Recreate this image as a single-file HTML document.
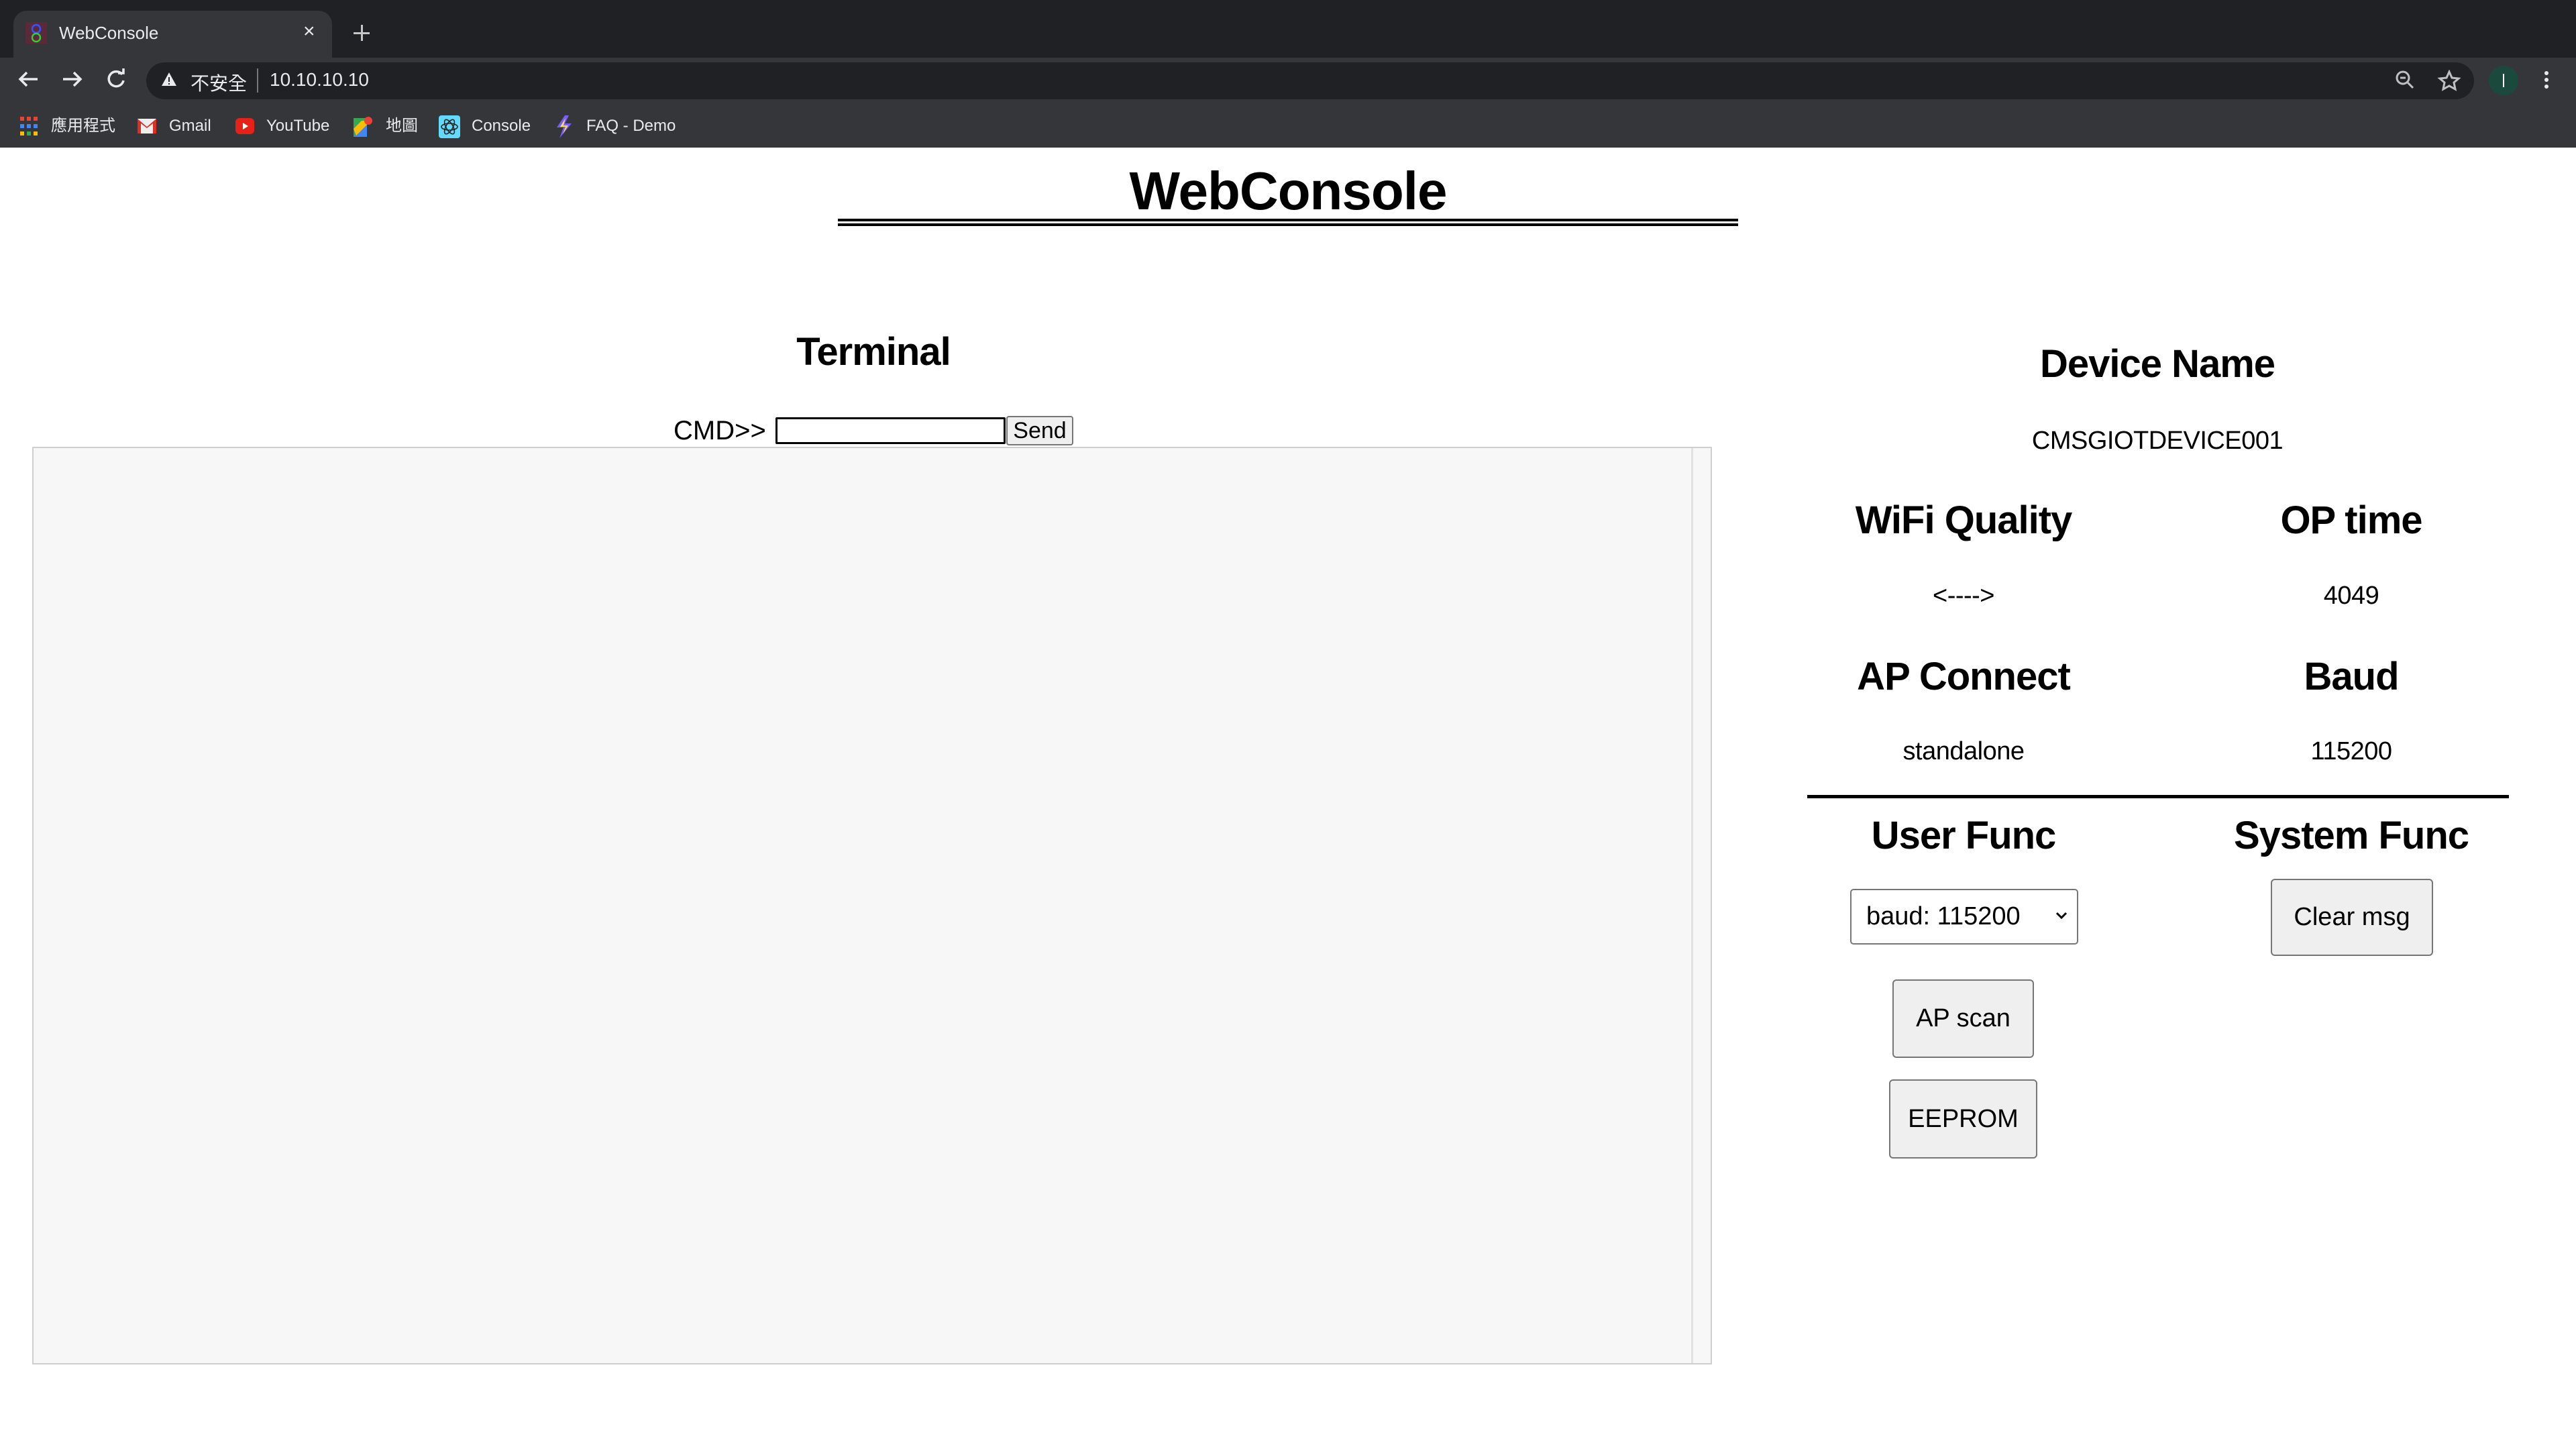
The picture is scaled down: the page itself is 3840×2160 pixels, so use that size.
<!DOCTYPE html>
<html><head><meta charset="utf-8"><style>
*{margin:0;padding:0;box-sizing:border-box}
body{width:3840px;height:2160px;background:#fff;position:relative;overflow:hidden;font-family:"Liberation Sans","Noto Sans CJK TC",sans-serif;color:#000}
.a{position:absolute}
.ct{position:absolute;transform:translateX(-50%);white-space:nowrap}
.h2{font-weight:bold;font-size:58px;line-height:1;letter-spacing:-1px}
.v{font-size:38px;line-height:1;letter-spacing:-0.5px}
.btn{position:absolute;background:#efefef;border:2px solid #767676;border-radius:6px;font-size:38px;display:flex;align-items:center;justify-content:center}
.chrome{color:#e8eaed}
.bm{position:absolute;top:174px;font-size:24px;color:#e8eaed;line-height:28px}
</style></head><body>
<div class="a" style="left:0;top:0;width:3840px;height:86px;background:#202124"></div>
<div class="a" style="left:20px;top:16px;width:475px;height:70px;background:#35363a;border-radius:20px 20px 0 0"></div>
<svg class="a" style="left:38px;top:33px" width="32" height="32"><rect x="0" y="0" width="32" height="32" fill="#5a2a3a"/><circle cx="16" cy="10" r="6" fill="none" stroke="#3355ff" stroke-width="2.5"/><circle cx="16" cy="23" r="6" fill="none" stroke="#33cc33" stroke-width="2.5"/></svg>
<div class="a chrome" style="left:88px;top:34px;font-size:26px">WebConsole</div>
<div class="a chrome" style="left:452px;top:30px;font-size:30px">×</div>
<div class="a" style="left:527px;top:48px;width:24px;height:3px;background:#c4c7c5"></div>
<div class="a" style="left:538px;top:37px;width:3px;height:24px;background:#c4c7c5"></div>
<div class="a" style="left:0;top:86px;width:3840px;height:134px;background:#35363a"></div>
<svg class="a" style="left:26px;top:102px" width="180" height="32" stroke="#e8eaed" stroke-width="3.5" fill="none">
<path d="M30 16H4M14 6L4 16L14 26"/><path d="M68 16H94M84 6L94 16L84 26"/>
<path d="M156 9A11 11 0 1 0 158 18"/><path d="M150 7H158V0" /></svg>
<div class="a" style="left:218px;top:93px;width:3470px;height:55px;background:#202124;border-radius:28px"></div>
<svg class="a" style="left:240px;top:106px" width="24" height="24"><path d="M12 2L23 22H1Z" fill="#e8eaed"/><rect x="11" y="9" width="2" height="7" fill="#202124"/><rect x="11" y="18" width="2" height="2" fill="#202124"/></svg>
<div class="a chrome" style="left:284px;top:103px;font-size:28px">不安全</div>
<div class="a" style="left:383px;top:102px;width:2px;height:36px;background:#777"></div>
<div class="a chrome" style="left:402px;top:103px;font-size:28px">10.10.10.10</div>
<svg class="a" style="left:3570px;top:104px" width="100" height="32" stroke="#bdc1c6" stroke-width="3" fill="none"><circle cx="12" cy="12" r="9"/><path d="M8 12H16M19 19L27 27"/><path d="M81 3L85 12L95 13L88 19L90 29L81 24L72 29L74 19L67 13L77 12Z"/></svg>
<div class="a" style="left:3710px;top:98px;width:44px;height:44px;border-radius:50%;background:#1b4a3c"></div>
<div class="a" style="left:3731px;top:110px;width:2px;height:20px;background:#fff"></div>
<div class="a" style="left:3793px;top:106px;width:6px;height:6px;border-radius:50%;background:#e8eaed;box-shadow:0 10px 0 #e8eaed,0 20px 0 #e8eaed"></div>
<svg class="a" style="left:30px;top:174px" width="26" height="28"><g fill="#e94335"><rect x="0" y="0" width="6" height="6"/><rect x="10" y="0" width="6" height="6"/><rect x="20" y="0" width="6" height="6"/></g><g fill="#4285f4"><rect x="0" y="11" width="6" height="6"/><rect x="10" y="11" width="6" height="6"/><rect x="20" y="11" width="6" height="6"/></g><g fill="#fbbc04"><rect x="0" y="22" width="6" height="6"/><rect x="10" y="22" width="6" height="6" fill="#34a853"/><rect x="20" y="22" width="6" height="6"/></g></svg>
<div class="bm" style="left:76px">應用程式</div>
<svg class="a" style="left:205px;top:177px" width="28" height="22"><rect width="28" height="22" fill="#eee"/><path d="M0 0L14 12L28 0V22H23V7L14 14L5 7V22H0Z" fill="#d93025"/></svg>
<div class="bm" style="left:252px">Gmail</div>
<svg class="a" style="left:351px;top:176px" width="28" height="24"><rect width="28" height="24" rx="6" fill="#e62117"/><path d="M11 7L19 12L11 17Z" fill="#fff"/></svg>
<div class="bm" style="left:397px">YouTube</div>
<svg class="a" style="left:527px;top:172px" width="28" height="32"><path d="M0 4H20V32H0Z" fill="#34a853"/><path d="M0 32L20 12V32Z" fill="#4285f4"/><path d="M0 20L12 8H20V14L4 30Z" fill="#fbbc04"/><circle cx="22" cy="8" r="6" fill="#ea4335"/></svg>
<div class="bm" style="left:575px">地圖</div>
<svg class="a" style="left:654px;top:172px" width="32" height="34"><rect width="32" height="34" rx="4" fill="#61dafb"/><g fill="none" stroke="#222" stroke-width="1.6"><ellipse cx="16" cy="17" rx="12" ry="5"/><ellipse cx="16" cy="17" rx="12" ry="5" transform="rotate(60 16 17)"/><ellipse cx="16" cy="17" rx="12" ry="5" transform="rotate(-60 16 17)"/></g></svg>
<div class="bm" style="left:703px">Console</div>
<svg class="a" style="left:826px;top:172px" width="28" height="34"><path d="M16 0L4 18H14L8 34L26 12H16L22 0Z" fill="#7b5cff"/><path d="M17 4L9 17H17L13 28L21 15H14Z" fill="#f5e050"/></svg>
<div class="bm" style="left:874px">FAQ - Demo</div>

<div class="ct" style="left:1920px;top:245px;font-size:80px;font-weight:bold;line-height:1;letter-spacing:-1px">WebConsole</div>
<div class="a" style="left:1249px;top:326px;width:1342px;height:11px;border-top:4px solid #000;border-bottom:4px solid #000"></div>

<div class="ct h2" style="left:1302px;top:496px">Terminal</div>
<div class="a" style="left:1004px;top:620px;font-size:40px;line-height:44px">CMD&gt;&gt;</div>
<div class="a" style="left:1156px;top:622px;width:343px;height:40px;border:3px solid #000;border-radius:2px;background:#fff"></div>
<div class="btn" style="left:1500px;top:620px;width:100px;height:44px;font-size:34px;border-radius:4px">Send</div>
<div class="a" style="left:48px;top:666px;width:2504px;height:1368px;background:#f7f7f7;border:2px solid #cfcfcf"></div>
<div class="a" style="left:2521px;top:668px;width:3px;height:1364px;background:#e2e2e2"></div>

<div class="ct h2" style="left:3216px;top:514px">Device Name</div>
<div class="ct v" style="left:3216px;top:638px">CMSGIOTDEVICE001</div>
<div class="ct h2" style="left:2927px;top:747px">WiFi Quality</div>
<div class="ct h2" style="left:3505px;top:747px">OP time</div>
<div class="ct v" style="left:2927px;top:869px">&lt;----&gt;</div>
<div class="ct v" style="left:3505px;top:869px">4049</div>
<div class="ct h2" style="left:2927px;top:980px">AP Connect</div>
<div class="ct h2" style="left:3505px;top:980px">Baud</div>
<div class="ct v" style="left:2927px;top:1101px">standalone</div>
<div class="ct v" style="left:3505px;top:1101px">115200</div>
<div class="a" style="left:2694px;top:1185px;width:1046px;height:5px;background:#000"></div>
<div class="ct h2" style="left:2927px;top:1217px">User Func</div>
<div class="ct h2" style="left:3505px;top:1217px">System Func</div>
<div class="a" style="left:2758px;top:1325px;width:340px;height:83px;border:2px solid #767676;border-radius:5px;background:#fff;font-size:38px;line-height:79px;padding-left:22px">baud: 115200</div>
<svg class="a" style="left:3064px;top:1358px" width="18" height="14"><path d="M2 3L9 10L16 3" stroke="#000" stroke-width="3" fill="none"/></svg>
<div class="btn" style="left:3385px;top:1310px;width:242px;height:115px">Clear msg</div>
<div class="btn" style="left:2821px;top:1460px;width:211px;height:117px">AP scan</div>
<div class="btn" style="left:2816px;top:1609px;width:221px;height:118px">EEPROM</div>
</body></html>
